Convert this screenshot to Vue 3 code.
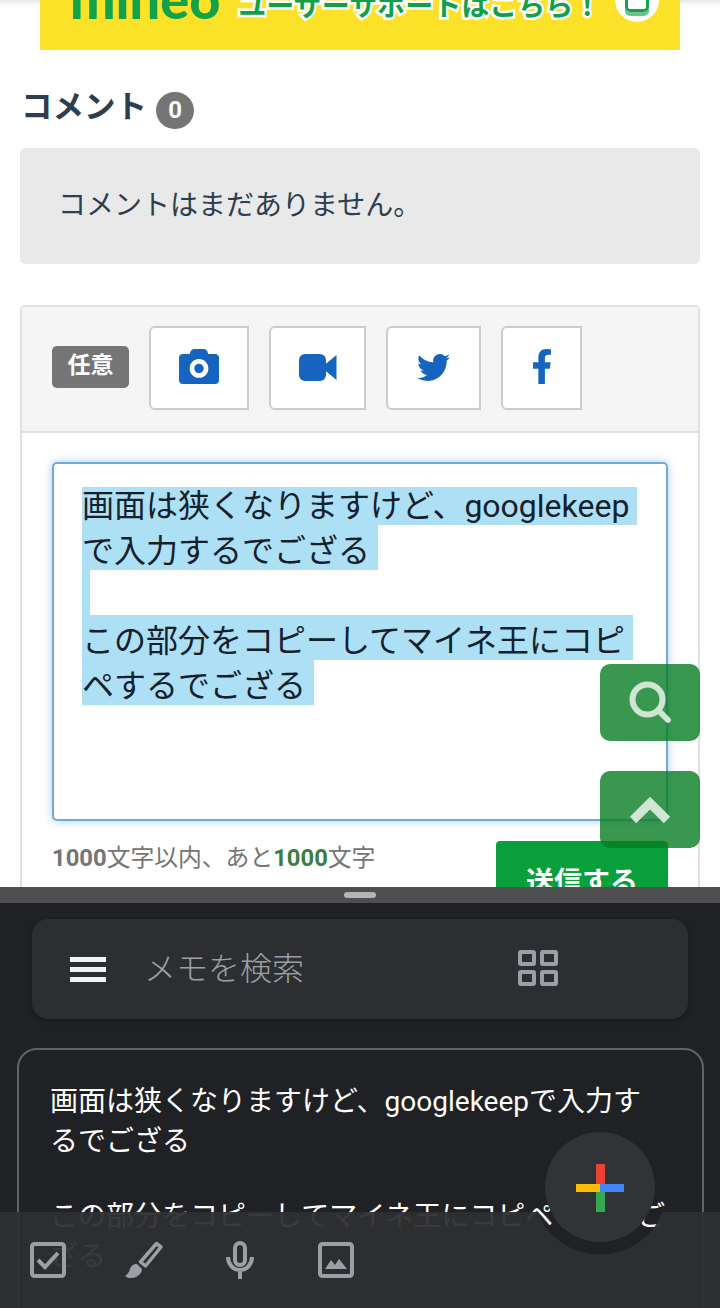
<script setup>
const selected = [
  '画面は狭くなりますけど、googlekeep',
  'で入力するでござる',
  '',
  'この部分をコピーしてマイネ王にコピ',
  'ペするでござる',
]
const note = [
  ['画面は狭くなりますけど、googlekeepで入力す', 'るでござる'],
  ['この部分をコピーしてマイネ王にコピペするでご', 'ざる'],
]
</script>

<template>
  <div class="screen">
    <section class="site">
      <div class="banner">
        <span class="brand">mineo</span>
        <span class="promo">ユーザーサポートはこちら！</span>
        <span class="promo-icon"><i></i></span>
      </div>

      <div class="heading">
        <h2>コメント</h2>
        <span class="count">0</span>
      </div>
      <div class="empty">コメントはまだありません。</div>

      <div class="form">
        <div class="attach">
          <span class="optional">任意</span>
          <button class="tool w1">
            <svg class="lift" width="40" height="35" viewBox="0 32 512 448"><path fill="#1565c0" d="M512 144v288c0 26.5-21.5 48-48 48H48c-26.5 0-48-21.5-48-48V144c0-26.5 21.5-48 48-48h88l12.3-32.9c7-18.7 24.9-31.1 44.9-31.1h125.5c20 0 37.900 12.400 44.900 31.100L376 96h88c26.500 0 48 21.500 48 48zM376 280c0-66.200-53.800-120-120-120s-120 53.800-120 120 53.800 120 120 120 120-53.800 120-120zm-60 0c0 33-27 60-60 60s-60-27-60-60 27-60 60-60 60 27 60 60z" fill-rule="evenodd"/></svg>
          </button>
          <button class="tool w2">
            <svg class="lift-sm" width="38" height="27" viewBox="0 0 38 27"><path fill="#1565c0" d="M6 0h15a6 6 0 0 1 6 6v15a6 6 0 0 1-6 6H6a6 6 0 0 1-6-6V6a6 6 0 0 1 6-6z"/><path fill="#1565c0" d="M26 10.500L37.500 1v25L26 16.500z"/></svg>
          </button>
          <button class="tool w3">
            <svg class="lift-sm" width="33" height="27" viewBox="0 48 512 416"><path fill="#1565c0" d="M459.37 151.716c.325 4.548.325 9.097.325 13.645 0 138.72-105.583 298.558-298.558 298.558-59.452 0-114.68-17.219-161.137-47.106 8.447.974 16.568 1.299 25.34 1.299 49.055 0 94.213-16.568 130.274-44.832-46.132-.975-84.792-31.188-98.112-72.772 6.498.974 12.995 1.624 19.818 1.624 9.421 0 18.843-1.3 27.614-3.573-48.081-9.747-84.143-51.98-84.143-102.985v-1.299c13.969 7.797 30.214 12.67 47.431 13.319-28.264-18.843-46.781-51.005-46.781-87.391 0-19.492 5.197-37.36 14.294-52.954 51.655 63.675 129.3 105.258 216.365 109.807-1.624-7.797-2.599-15.918-2.599-24.04 0-57.828 46.782-104.934 104.934-104.934 30.213 0 57.502 12.67 76.67 33.137 23.715-4.548 46.456-13.32 66.599-25.34-7.798 24.366-24.366 44.833-46.132 57.827 21.117-2.273 41.584-8.122 60.426-16.243-14.292 20.791-32.161 39.308-52.628 54.253z"/></svg>
          </button>
          <button class="tool w4">
            <svg class="lift" width="18" height="35" viewBox="22 0 276 512" preserveAspectRatio="none"><path fill="#1565c0" d="M279.14 288l14.22-92.66h-88.91v-60.13c0-25.35 12.42-50.06 52.24-50.06h40.42V6.26S260.43 0 225.36 0c-73.22 0-121.08 44.38-121.08 124.72v70.62H22.89V288h81.39v224h100.17V288z"/></svg>
          </button>
        </div>

        <div class="compose">
          <div class="input">
            <span v-for="(line, i) in selected" :key="i" class="sel" :class="{ first: i === 0 }">{{ line }}</span>
          </div>
          <div class="foot">
            <span class="limit"><b>1000</b>文字以内、あと<b class="left">1000</b>文字</span>
            <button class="send">送信する</button>
          </div>
        </div>
      </div>

      <button class="float search">
        <svg width="44" height="44" viewBox="0 0 44 44" fill="none" stroke="#cfe6d4" stroke-width="6" stroke-linecap="round"><circle cx="19.500" cy="18.500" r="15"/><path d="M31 30l9 9"/></svg>
      </button>
      <button class="float top">
        <svg width="42" height="28" viewBox="0 0 42 28" fill="none" stroke="#cfe6d4" stroke-width="9"><path d="M4 24L21 7l17 17"/></svg>
      </button>
    </section>

    <div class="splitter"><i></i></div>

    <section class="keep">
      <div class="searchbar">
        <span class="menu"><i></i><i></i><i></i></span>
        <span class="placeholder">メモを検索</span>
        <svg class="grid" width="40" height="36" viewBox="0 0 40 36" fill="none" stroke="#9aa0a6" stroke-width="4"><rect x="2" y="2" width="14" height="12" rx="1"/><rect x="24" y="2" width="14" height="12" rx="1"/><rect x="2" y="22" width="14" height="12" rx="1"/><rect x="24" y="22" width="14" height="12" rx="1"/></svg>
      </div>

      <article class="note">
        <p v-for="(para, i) in note" :key="i">
          <span v-for="(l, j) in para" :key="j">{{ l }}</span>
        </p>
      </article>

      <div class="bar">
        <span class="cell">
          <svg width="36" height="36" viewBox="0 0 36 36" fill="none" stroke="#9aa0a6"><rect x="2" y="2" width="32" height="32" rx="2.500" stroke-width="4"/><path d="M8 18l7 7 13-14" stroke-width="4"/></svg>
        </span>
        <span class="cell">
          <svg width="40" height="40" viewBox="0 0 40 40" fill="none"><path d="M32.500 3.500l4.500 3.500-15.500 19-5-4z" stroke="#9aa0a6" stroke-width="3.500" stroke-linejoin="round"/><path d="M13 24c-4 0-6 2-7 5-1 3-2 5-5 7 2 2 7 3 11 1 4-2 6-5 6-8z" fill="#9aa0a6"/></svg>
        </span>
        <span class="cell">
          <svg width="28" height="38" viewBox="0 0 28 38" fill="none" stroke="#9aa0a6" stroke-width="4"><rect x="9" y="2" width="10" height="22" rx="5"/><path d="M2 16c0 7 5 13 12 13s12-6 12-13M14 29v9"/></svg>
        </span>
        <span class="cell">
          <svg width="36" height="36" viewBox="0 0 36 36" fill="none"><rect x="2" y="2" width="32" height="32" rx="2.500" stroke="#9aa0a6" stroke-width="4"/><path d="M7 27l6-9 4 5 4-6 8 10z" fill="#9aa0a6"/></svg>
        </span>
      </div>

      <button class="fab">
        <span class="arm red"></span>
        <span class="arm green"></span>
        <span class="arm yellow"></span>
        <span class="arm blue"></span>
      </button>
    </section>
  </div>
</template>

<style scoped>
.screen {
  width: 720px;
  height: 1308px;
  display: flex;
  flex-direction: column;
  overflow: hidden;
  position: relative;
  font-family: Roboto, "Noto Sans CJK JP", sans-serif;
  background: #fff;
}

.site {
  height: 887px;
  flex: none;
  padding: 0 20px;
  box-sizing: border-box;
  overflow: hidden;
  position: relative;
  box-shadow: inset 0 6px 6px -4px rgba(0, 0, 0, 0.12);
}

.banner {
  height: 50px;
  margin: 0 20px;
  padding: 0 25px 33px 30px;
  box-sizing: border-box;
  background: #fbe228;
  display: flex;
  align-items: flex-end;
  overflow: hidden;
  color: #0fa04a;
  font-weight: 700;
}
.brand {
  font-family: Lato, "Noto Sans", sans-serif;
  font-size: 54px;
  line-height: 36px;
  font-weight: 900;
  color: #11a24a;
}
.promo {
  margin-left: 18px;
  margin-bottom: -6px;
  font-size: 28px;
  line-height: 32px;
  -webkit-text-stroke: 5px #fff;
  paint-order: stroke fill;
  white-space: nowrap;
}
.promo-icon {
  width: 44px;
  height: 44px;
  margin-left: 14px;
  margin-bottom: -5px;
  border-radius: 50%;
  background: #fff;
  flex: none;
  display: flex;
  align-items: center;
  justify-content: center;
}
.promo-icon i {
  width: 24px;
  height: 24px;
  border: 3px solid #1c9f54;
  border-radius: 5px;
  box-sizing: border-box;
  box-shadow: 0 4px 0 #69c48c;
}

.heading {
  margin-top: 42px;
  height: 36px;
  display: flex;
  align-items: center;
  gap: 9px;
  padding-left: 1px;
}
.heading h2 {
  margin: 0 0 5px;
  font-size: 31.500px;
  line-height: 36px;
  font-weight: 700;
  color: #2c3e50;
}
.count {
  width: 38px;
  height: 37px;
  border-radius: 19px;
  background: #757575;
  color: #fff;
  font-size: 24px;
  font-weight: 700;
  display: flex;
  align-items: center;
  justify-content: center;
}

.empty {
  margin-top: 20px;
  height: 116px;
  padding-left: 38px;
  background: #e9e9e9;
  border-radius: 5px;
  color: #2c3e50;
  font-size: 28px;
  line-height: 116px;
}

.form {
  margin-top: 41px;
  border: 2px solid #e0e0e0;
  border-bottom: 0;
  border-radius: 5px 5px 0 0;
  height: 600px;
}
.attach {
  height: 126px;
  padding: 19px 30px 0;
  box-sizing: border-box;
  display: flex;
  gap: 20px;
  background: #f5f5f5;
  border-bottom: 2px solid #e0e0e0;
}
.optional {
  width: 77px;
  height: 42px;
  margin-top: 20px;
  background: #757575;
  color: #fff;
  font-size: 23px;
  font-weight: 700;
  line-height: 40px;
  text-align: center;
  border-radius: 5px;
}
.tool {
  height: 84px;
  padding: 0;
  background: #fff;
  border: 2px solid #ccc;
  border-radius: 6px 0 0 6px;
  display: flex;
  align-items: center;
  justify-content: center;
}
.lift { margin-bottom: 3px; }
.lift-sm { margin-bottom: 2px; }
.w1 { width: 100px; }
.w2 { width: 97px; }
.w3 { width: 95px; }
.w4 { width: 81px; }

.compose {
  padding: 29px 30px 0;
}
.input {
  height: 359px;
  box-sizing: border-box;
  padding: 16px 28px 0;
  border: 2px solid #6fa9d9;
  border-radius: 5px;
  background: #fff;
  box-shadow: 0 0 10px rgba(110, 175, 235, 0.6);
  color: #14202b;
  font-size: 32px;
  line-height: 52px;
}
.sel {
  display: block;
  width: fit-content;
  height: 45px;
  padding-right: 8px;
  background: #ade0f5;
  white-space: nowrap;
}
.sel.first {
  background: linear-gradient(transparent 7px, #ade0f5 7px);
}

.foot {
  margin-top: 20px;
  display: flex;
  justify-content: space-between;
}
.limit {
  margin-top: 1px;
  font-size: 23.800px;
  line-height: 32px;
  color: #757575;
}
.limit b { font-weight: 700; }
.limit .left { color: #3c7d44; }
.send {
  width: 172px;
  height: 70px;
  padding: 13px 0 0;
  border: 0;
  border-radius: 4px;
  background: #09a03c;
  color: #fff;
  font-family: inherit;
  font-size: 28px;
  font-weight: 700;
  line-height: 40px;
  display: block;
}

.float {
  position: absolute;
  left: 600px;
  width: 100px;
  height: 77px;
  padding: 0;
  border: 0;
  border-radius: 10px;
  background: rgba(9, 125, 35, 0.8);
  display: flex;
  align-items: center;
  justify-content: center;
}
.search { top: 664px; }
.top { top: 771px; }

.splitter {
  height: 16px;
  flex: none;
  background: #4f4f4f;
  display: flex;
  align-items: center;
  justify-content: center;
}
.splitter i {
  width: 32px;
  height: 6px;
  border-radius: 3px;
  background: #b5b5b5;
}

.keep {
  flex: 1;
  position: relative;
  overflow: hidden;
  background: #202124;
  padding-top: 16px;
}
.searchbar {
  height: 100px;
  margin: 0 32px;
  border-radius: 16px;
  background: #2d2e31;
  box-shadow: 0 2px 4px rgba(0, 0, 0, 0.25);
  display: flex;
  align-items: center;
  padding-left: 38px;
  box-sizing: border-box;
}
.menu {
  width: 36px;
  display: flex;
  flex-direction: column;
  gap: 5px;
}
.menu i {
  height: 5px;
  background: #f1f3f4;
}
.placeholder {
  margin: 0 0 0 38px;
  font-size: 32px;
  line-height: 40px;
  color: #9aa0a6;
  font-weight: 300;
}
.grid {
  margin-left: 214px;
  margin-top: -2px;
}

.note {
  margin: 29px 16px 0 17px;
  height: 300px;
  box-sizing: border-box;
  border: 2px solid #5f6368;
  border-radius: 20px;
  padding: 32px 0 0 31px;
  color: #fff;
  font-size: 28px;
  line-height: 40px;
}
.note p {
  margin: 0 0 35px;
}
.note span {
  display: block;
  white-space: nowrap;
}

.bar {
  position: absolute;
  left: 0;
  right: 0;
  bottom: 0;
  height: 96px;
  background: rgba(46, 47, 50, 0.95);
  display: flex;
  -webkit-mask: radial-gradient(circle 67.500px at 600px -24.500px, transparent 99%, #000 100%);
  mask: radial-gradient(circle 67.500px at 600px -24.500px, transparent 99%, #000 100%);
}
.cell {
  width: 96px;
  display: flex;
  align-items: center;
  justify-content: center;
}

.fab {
  position: absolute;
  left: 545px;
  top: 229px;
  width: 110px;
  height: 110px;
  padding: 0;
  border: 0;
  border-radius: 50%;
  background: #323336;
}
.arm {
  position: absolute;
}
.red { left: 51px; top: 32px; width: 9px; height: 24px; background: #ea4335; }
.green { left: 51px; top: 56px; width: 9px; height: 24px; background: #34a853; }
.yellow { left: 31px; top: 52px; width: 24px; height: 8px; background: #fbbc04; }
.blue { left: 55px; top: 52px; width: 24px; height: 8px; background: #4285f4; }
</style>
